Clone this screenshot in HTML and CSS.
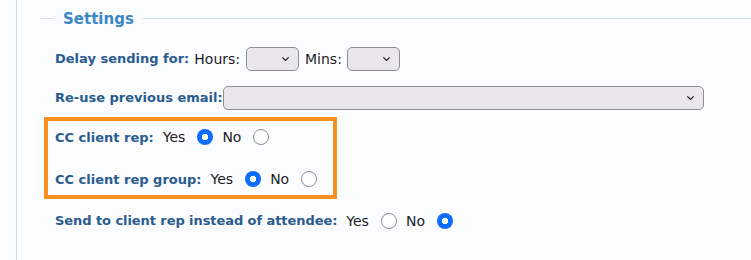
FILE: index.html
```html
<!DOCTYPE html>
<html lang="en">
<head>
    <meta charset="UTF-8">
    <title>Settings</title>
    <link rel="stylesheet" href="styles.css">
</head>
<body>
    <div class="panel">
        <div class="legend">
            <span class="rule short"></span>
            <h2>Settings</h2>
            <span class="rule"></span>
        </div>

        <div class="row delay">
            <label class="name">Delay sending for:</label>
            <span class="opt">Hours:</span>
            <span class="select small">
                <select></select>
                <svg viewBox="0 0 10 6"><path d="M1.5 1.2 5 4.6 8.5 1.2"/></svg>
            </span>
            <span class="opt">Mins:</span>
            <span class="select small">
                <select></select>
                <svg viewBox="0 0 10 6"><path d="M1.5 1.2 5 4.6 8.5 1.2"/></svg>
            </span>
        </div>

        <div class="row">
            <label class="name tight">Re-use previous email:</label>
            <span class="select wide">
                <select></select>
                <svg viewBox="0 0 10 6"><path d="M1.5 1.2 5 4.6 8.5 1.2"/></svg>
            </span>
        </div>

        <div class="highlight">
            <div class="row">
                <label class="name">CC client rep:</label>
                <span class="opt">Yes</span>
                <input type="radio" name="cc" checked>
                <span class="opt">No</span>
                <input type="radio" name="cc">
            </div>
            <div class="row">
                <label class="name">CC client rep group:</label>
                <span class="opt">Yes</span>
                <input type="radio" name="ccgroup" checked>
                <span class="opt">No</span>
                <input type="radio" name="ccgroup">
            </div>
        </div>

        <div class="row last">
            <label class="name long">Send to client rep instead of attendee:</label>
            <span class="opt">Yes</span>
            <input type="radio" name="sendrep">
            <span class="opt">No</span>
            <input type="radio" name="sendrep" checked>
        </div>
    </div>
</body>
</html>
```

FILE: styles.css
```css
body {
    margin: 0;
    background: #fafcfd;
    font-family: "DejaVu Sans", Verdana, sans-serif;
    font-size: 13px;
    color: #1d1d1f;
}
.panel {
    margin-left: 16px;
    border-left: 1px solid #c6dcee;
    height: 260px;
    padding-left: 23px;
    box-sizing: border-box;
}
.legend {
    display: flex;
    align-items: center;
    height: 37px;
}
.rule {
    flex: 1;
    height: 1px;
    background: #cde0f0;
}
.rule.short {
    flex: none;
    width: 14px;
}
.legend h2 {
    margin: 0;
    padding: 0 9px;
    font-size: 15px;
    font-weight: bold;
    color: #3d87c7;
}
.row {
    display: flex;
    align-items: center;
    height: 39px;
    padding-left: 15px;
}
.row.delay {
    margin-top: 2px;
}
.name {
    font-weight: bold;
    color: #2b5b8f;
    margin-right: 9px;
}
.name.tight {
    margin-right: 0;
}
.name.long {
    letter-spacing: -0.07px;
}
.opt {
    font-size: 14px;
    margin-right: 12px;
}
.delay .name {
    margin-right: 5px;
}
.delay .opt {
    margin-right: 6px;
}
.delay .select + .opt {
    margin-left: 6px;
    margin-right: 5px;
}
.select {
    position: relative;
    display: inline-block;
    height: 24px;
}
.select select {
    appearance: none;
    -webkit-appearance: none;
    height: 24px;
    width: 100%;
    margin: 0;
    background: #e9e7ec;
    border: 1px solid #8f8d93;
    border-radius: 5px;
}
.select svg {
    position: absolute;
    right: 9px;
    top: 9px;
    width: 9px;
    height: 6px;
    fill: none;
    stroke: #1d1d1f;
    stroke-width: 1.4;
    pointer-events: none;
}
.select.small {
    width: 53px;
}
.select.wide {
    width: 481px;
}
input[type="radio"] {
    appearance: none;
    -webkit-appearance: none;
    width: 16px;
    height: 16px;
    margin: 0 9px 0 0;
    border: 1px solid #8d8d92;
    border-radius: 50%;
    background: #fff;
    box-sizing: border-box;
}
input[type="radio"]:checked {
    border: none;
    background: radial-gradient(circle, #fff 0 3px, #0b6cfe 3.5px);
}
.highlight {
    width: 293px;
    height: 82px;
    margin-left: 4px;
    border: 4px solid #f7901e;
    box-sizing: border-box;
    padding-top: 1px;
}
.highlight .row {
    height: 30px;
    padding-left: 7px;
}
.highlight .row + .row {
    margin-top: 12px;
}
.row.last {
    margin-top: 2px;
}
```
